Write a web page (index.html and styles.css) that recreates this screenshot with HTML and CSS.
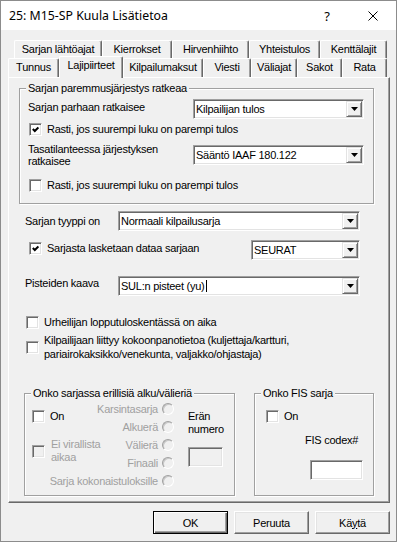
FILE: index.html
```html
<!DOCTYPE html>
<html lang="fi">
<head>
    <meta charset="UTF-8">
    <meta name="viewport" content="width=device-width, initial-scale=1.0">
    <title>25: M15-SP Kuula Lisätietoa</title>
    <link rel="stylesheet" href="styles.css">
</head>
<body>
<div class="window">
    <!-- Otsikkopalkki -->
    <div class="titlebar">
        <span class="title">25: M15-SP Kuula Lisätietoa</span>
        <span class="caption-btn help">?</span>
        <span class="caption-btn close">
            <svg width="10" height="10" viewBox="0 0 10 10"><path d="M0.5 0.5L9.5 9.5M9.5 0.5L0.5 9.5" stroke="#000" stroke-width="1" fill="none"/></svg>
        </span>
    </div>

    <div class="client">
        <!-- Välilehdet -->
        <div class="tab-row back">
            <div class="tab">Sarjan lähtöajat</div>
            <div class="tab">Kierrokset</div>
            <div class="tab">Hirvenhiihto</div>
            <div class="tab">Yhteistulos</div>
            <div class="tab">Kenttälajit</div>
        </div>
        <div class="tab-row front">
            <div class="tab">Tunnus</div>
            <div class="tab active">Lajipiirteet</div>
            <div class="tab">Kilpailumaksut</div>
            <div class="tab">Viesti</div>
            <div class="tab">Väliajat</div>
            <div class="tab">Sakot</div>
            <div class="tab">Rata</div>
        </div>

        <div class="panel">
            <!-- Paremmusjärjestys -->
            <div class="group group-order">
                <div class="group-title">Sarjan paremmusjärjestys ratkeaa</div>
                <div class="g-row g-row1">
                    <div class="g-label pad-top">Sarjan parhaan ratkaisee</div>
                    <div class="combo w171">
                        <span class="combo-value">Kilpailijan tulos</span>
                        <span class="combo-btn"><svg width="7" height="4" viewBox="0 0 7 4"><polygon points="0,0 7,0 3.5,4" fill="#000"/></svg></span>
                    </div>
                </div>
                <div class="check-row g-check1">
                    <span class="check"><svg width="7" height="7" viewBox="0 0 7 7"><polyline points="0.8,3 2.8,5 6.4,1.4" stroke="#000" stroke-width="2" fill="none"/></svg></span>
                    <span>Rasti, jos suurempi luku on parempi tulos</span>
                </div>
                <div class="g-row g-row2">
                    <div class="g-label two-lines">Tasatilanteessa järjestyksen<br>ratkaisee</div>
                    <div class="combo w171">
                        <span class="combo-value">Sääntö IAAF 180.122</span>
                        <span class="combo-btn"><svg width="7" height="4" viewBox="0 0 7 4"><polygon points="0,0 7,0 3.5,4" fill="#000"/></svg></span>
                    </div>
                </div>
                <div class="check-row g-check2">
                    <span class="check"></span>
                    <span>Rasti, jos suurempi luku on parempi tulos</span>
                </div>
            </div>

            <!-- Sarjan tyyppi -->
            <div class="row row-type">
                <div class="row-label">Sarjan tyyppi on</div>
                <div class="combo w242">
                    <span class="combo-value">Normaali kilpailusarja</span>
                    <span class="combo-btn"><svg width="7" height="4" viewBox="0 0 7 4"><polygon points="0,0 7,0 3.5,4" fill="#000"/></svg></span>
                </div>
            </div>

            <div class="row row-data">
                <div class="check-row">
                    <span class="check"><svg width="7" height="7" viewBox="0 0 7 7"><polyline points="0.8,3 2.8,5 6.4,1.4" stroke="#000" stroke-width="2" fill="none"/></svg></span>
                    <span>Sarjasta lasketaan dataa sarjaan</span>
                </div>
                <div class="combo w109">
                    <span class="combo-value">SEURAT</span>
                    <span class="combo-btn"><svg width="7" height="4" viewBox="0 0 7 4"><polygon points="0,0 7,0 3.5,4" fill="#000"/></svg></span>
                </div>
            </div>

            <div class="row row-points">
                <div class="row-label pad-top">Pisteiden kaava</div>
                <div class="combo w242">
                    <span class="combo-value">SUL:n pisteet (yu)<span class="caret"></span></span>
                    <span class="combo-btn"><svg width="7" height="4" viewBox="0 0 7 4"><polygon points="0,0 7,0 3.5,4" fill="#000"/></svg></span>
                </div>
            </div>

            <div class="check-row check-time">
                <span class="check"></span>
                <span>Urheilijan lopputuloskentässä on aika</span>
            </div>
            <div class="check-row check-team">
                <span class="check"></span>
                <span class="lines14">Kilpailijaan liittyy kokoonpanotietoa (kuljettaja/kartturi,<br>pariairokaksikko/venekunta, valjakko/ohjastaja)</span>
            </div>

            <!-- Alaosan ryhmät -->
            <div class="bottom-groups">
                <div class="group group-heats">
                    <div class="group-title">Onko sarjassa erillisiä alku/välieriä</div>
                    <div class="heat-grid">
                        <div class="check-row heat-on">
                            <span class="check"></span>
                            <span>On</span>
                        </div>
                        <div class="check-row heat-unofficial disabled">
                            <span class="check"></span>
                            <span class="lines13">Ei virallista<br>aikaa</span>
                        </div>
                        <div class="radio-item r1">Karsintasarja <span class="radio"></span></div>
                        <div class="radio-item r2">Alkuerä <span class="radio"></span></div>
                        <div class="radio-item r3">Välierä <span class="radio"></span></div>
                        <div class="radio-item r4">Finaali <span class="radio"></span></div>
                        <div class="radio-item r5">Sarja kokonaistuloksille <span class="radio"></span></div>
                        <div class="heat-label">Erän<br>numero</div>
                        <div class="edit disabled heat-edit"></div>
                    </div>
                </div>

                <div class="group group-fis">
                    <div class="group-title">Onko FIS sarja</div>
                    <div class="check-row fis-check">
                        <span class="check"></span>
                        <span>On</span>
                    </div>
                    <div class="fis-label">FIS codex#</div>
                    <div class="edit fis-edit"></div>
                </div>
            </div>
        </div>

        <!-- Painikkeet -->
        <div class="buttons">
            <div class="btn default">OK</div>
            <div class="btn">Peruuta</div>
            <div class="btn">Kä<u>y</u>tä</div>
        </div>
    </div>
</div>
</body>
</html>
```

FILE: styles.css
```css
* {
    margin: 0;
    padding: 0;
    box-sizing: border-box;
}

body {
    font-family: "Liberation Sans", Arial, sans-serif;
    font-size: 11px;
    letter-spacing: -0.25px;
    color: #000;
    background: #f0f0f0;
}

.window {
    width: 397px;
    height: 542px;
    border: 1px solid #8c8c8c;
    background: #f0f0f0;
    overflow: hidden;
}

/* Otsikkopalkki */
.titlebar {
    display: flex;
    align-items: center;
    height: 29px;
    background: #fff;
}
.title {
    flex: 1;
    padding-left: 8px;
    font-family: "Noto Sans", sans-serif;
    font-size: 12.3px;
    letter-spacing: 0;
}
.caption-btn {
    width: 46px;
    height: 29px;
    display: flex;
    align-items: center;
    justify-content: center;
}
.help {
    font-family: "Noto Sans", sans-serif;
    font-size: 13px;
    letter-spacing: 0;
}

.client {
    padding: 10px 6px 0 7px;
}

/* Välilehdet */
.tab-row {
    display: flex;
    align-items: flex-start;
}
.tab-row.back {
    height: 18px;
    margin-left: 6px;
}
.tab-row.front {
    height: 19px;
}
.tab {
    height: 100%;
    border-top: 1px solid #fff;
    border-left: 1px solid #fff;
    border-right: 1px solid #696969;
    border-radius: 2px 2px 0 0;
    box-shadow: inset -1px 0 #a0a0a0;
    text-align: center;
    line-height: 16px;
    white-space: nowrap;
}
.front .tab {
    line-height: 17px;
}
.tab.active {
    position: relative;
    z-index: 1;
    height: 22px;
    margin: -2px 0 -1px;
    background: #f0f0f0;
    line-height: 16px;
}
.back .tab:nth-child(1) { width: 88px; }
.back .tab:nth-child(2) { width: 70px; }
.back .tab:nth-child(3) { width: 77px; }
.back .tab:nth-child(4) { width: 71px; }
.back .tab:nth-child(5) { width: 67px; }
.front .tab:nth-child(1) { width: 51px; }
.front .tab:nth-child(2) { width: 64px; }
.front .tab:nth-child(3) { width: 80px; }
.front .tab:nth-child(4) { width: 48px; }
.front .tab:nth-child(5) { width: 46px; }
.front .tab:nth-child(6) { width: 45px; }
.front .tab:nth-child(7) { width: 45px; }

.panel {
    height: 426px;
    border: 1px solid;
    border-color: #fff #696969 #696969 #fff;
    box-shadow: inset -1px -1px #a0a0a0;
}

/* Ryhmäkehykset */
.group {
    border: 1px solid #a0a0a0;
    box-shadow: inset 1px 1px #fff, 1px 1px #fff;
}
.group-title {
    width: fit-content;
    margin: -7px 0 0 6px;
    padding: 0 2px;
    line-height: 13px;
    background: #f0f0f0;
    white-space: nowrap;
}

.group-order {
    width: 355px;
    height: 116px;
    margin: 10px 0 0 10px;
}
.g-row {
    display: flex;
    align-items: center;
    padding-left: 8px;
}
.g-label {
    width: 165px;
    line-height: 13px;
}
.g-label.two-lines {
    line-height: 12px;
}
.pad-top {
    align-self: flex-start;
    padding-top: 2px;
}
.g-row1 { margin-top: 4px; }
.g-row2 { margin-top: 7px; }
.g-check1 { margin: 4px 0 0 9px; }
.g-check2 { margin: 12px 0 0 9px; }

/* Valintaruudut */
.check-row {
    display: flex;
    align-items: center;
    gap: 5px;
    line-height: 13px;
    white-space: nowrap;
}
.check {
    flex: none;
    width: 13px;
    height: 13px;
    display: flex;
    align-items: center;
    justify-content: center;
    background: #fff;
    border: 1px solid;
    border-color: #a0a0a0 #fff #fff #a0a0a0;
    box-shadow: inset 1px 1px #696969, inset -1px -1px #e3e3e3;
}
.disabled {
    color: #a0a0a0;
}
.disabled .check {
    background: #f0f0f0;
}

/* Pudotusvalikot */
.combo {
    display: flex;
    align-items: center;
    height: 20px;
    padding: 1px;
    background: #fff;
    border: 1px solid;
    border-color: #a0a0a0 #fff #fff #a0a0a0;
    box-shadow: inset 1px 1px #696969, inset -1px -1px #e3e3e3;
}
.combo-value {
    flex: 1;
    padding-left: 1px;
    white-space: nowrap;
    overflow: hidden;
}
.combo-btn {
    flex: none;
    width: 16px;
    height: 16px;
    display: flex;
    align-items: center;
    justify-content: center;
    background: #f0f0f0;
    border: 1px solid;
    border-color: #e3e3e3 #696969 #696969 #e3e3e3;
    box-shadow: inset 1px 1px #fff, inset -1px -1px #a0a0a0;
}
.caret {
    display: inline-block;
    width: 1px;
    height: 12px;
    margin-left: 1px;
    background: #000;
    vertical-align: -2px;
}
.w171 { width: 171px; }
.w242 { width: 242px; }
.w109 { width: 109px; }

.edit {
    height: 20px;
    background: #fff;
    border: 1px solid;
    border-color: #a0a0a0 #fff #fff #a0a0a0;
    box-shadow: inset 1px 1px #696969, inset -1px -1px #e3e3e3;
}
.edit.disabled {
    background: #f0f0f0;
}

/* Paneelin rivit */
.row {
    display: flex;
    align-items: center;
    padding-left: 16px;
}
.row-label {
    width: 93px;
    line-height: 13px;
}
.row-type { margin-top: 7px; }
.row-data {
    margin-top: 9px;
    padding: 0 29px 0 20px;
    align-items: flex-start;
}
.row-data .check-row {
    margin-top: 2px;
}
.row-data .combo {
    margin-left: auto;
}
.row-points { margin-top: 16px; }
.row-points .pad-top { padding-top: 1px; }

.check-time { margin: 20px 0 0 17px; }
.check-team { margin: 4px 0 0 17px; }
.lines14 { line-height: 14px; }
.lines13 { line-height: 13px; }

/* Alaosan ryhmät */
.bottom-groups {
    display: flex;
    gap: 19px;
    margin: 32px 0 0 15px;
}
.group-heats {
    width: 211px;
    height: 103px;
}
.group-fis {
    width: 120px;
    height: 103px;
}
.heat-grid {
    display: grid;
    grid-template-columns: 68px 74px 1fr;
    grid-template-rows: repeat(5, 18px);
    padding-left: 7px;
}
.heat-on {
    grid-column: 1;
    grid-row: 1 / 3;
    align-self: start;
    margin-top: 10px;
}
.heat-unofficial {
    grid-column: 1;
    grid-row: 3 / 5;
    align-self: start;
    margin-top: 2px;
    gap: 6px;
}
.radio-item {
    grid-column: 2;
    justify-self: end;
    align-self: center;
    display: flex;
    align-items: center;
    gap: 4px;
    white-space: nowrap;
    color: #a0a0a0;
}
.r1 { grid-row: 1; }
.r2 { grid-row: 2; }
.r3 { grid-row: 3; }
.r4 { grid-row: 4; }
.r5 { grid-row: 5; grid-column: 1 / 3; }
.radio {
    flex: none;
    width: 12px;
    height: 12px;
    border-radius: 50%;
    background: #f0f0f0;
    border: 1px solid;
    border-color: #a0a0a0 #fff #fff #a0a0a0;
    box-shadow: inset 1px 1px #c8c8c8;
}
.heat-label {
    grid-column: 3;
    grid-row: 1 / 3;
    align-self: start;
    margin: 10px 0 0 14px;
    line-height: 13px;
}
.heat-edit {
    grid-column: 3;
    grid-row: 3 / 5;
    align-self: start;
    width: 35px;
    margin: 11px 0 0 14px;
}

.fis-check { margin: 10px 0 0 11px; }
.fis-label {
    margin: 11px 0 0 50px;
    line-height: 13px;
}
.fis-edit {
    width: 53px;
    margin: 13px 0 0 55px;
}

/* Painikkeet */
.buttons {
    display: flex;
    justify-content: flex-end;
    gap: 6px;
    margin-top: 8px;
}
.btn {
    width: 75px;
    height: 23px;
    display: flex;
    align-items: center;
    justify-content: center;
    background: #f0f0f0;
    border: 1px solid;
    border-color: #fff #696969 #696969 #fff;
    box-shadow: inset -1px -1px #a0a0a0, inset 1px 1px #e3e3e3;
}
.btn.default {
    border: 1px solid #000;
    box-shadow: inset 1px 1px #fff, inset -1px -1px #696969, inset -2px -2px #a0a0a0;
}
```
